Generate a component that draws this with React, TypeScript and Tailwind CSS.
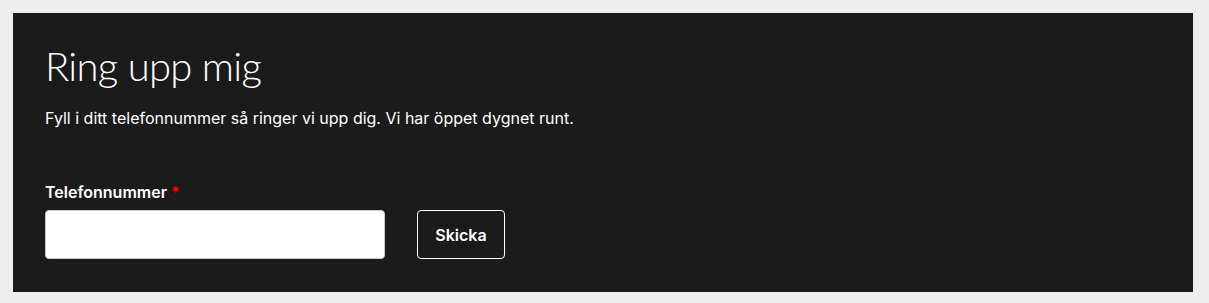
export default function App() {
  return (
    <div className="min-h-screen bg-[#eeeeee] pt-[13px] pl-[13px] pr-[16px] pb-[11px]">
      <section className="bg-[#1b1b1b] px-8 pt-[29px] pb-[33px] text-white font-['Inter',sans-serif]">
        <h1 className="font-['Lato',sans-serif] text-[40px] leading-[48px] font-light tracking-[-0.7px]">Ring upp mig</h1>
        <p className="mt-[16px] text-[16px] leading-6">
          Fyll i ditt telefonnummer så ringer vi upp dig. Vi har öppet dygnet runt.
        </p>
        <form className="mt-[52px]" onSubmit={(e) => e.preventDefault()}>
          <label className="block text-[16px] leading-5 font-semibold mb-[8px]">
            Telefonnummer <span className="text-[#ff0000]">*</span>
          </label>
          <div className="flex items-center gap-8">
            <input
              type="tel"
              className="w-[340px] h-[49px] rounded-[4px] bg-white border border-[#cccccc] px-3 text-black outline-none"
            />
            <button
              type="submit"
              className="h-[49px] w-[88px] rounded-[4px] border border-white text-[16px] font-semibold"
            >
              Skicka
            </button>
          </div>
        </form>
      </section>
    </div>
  );
}
